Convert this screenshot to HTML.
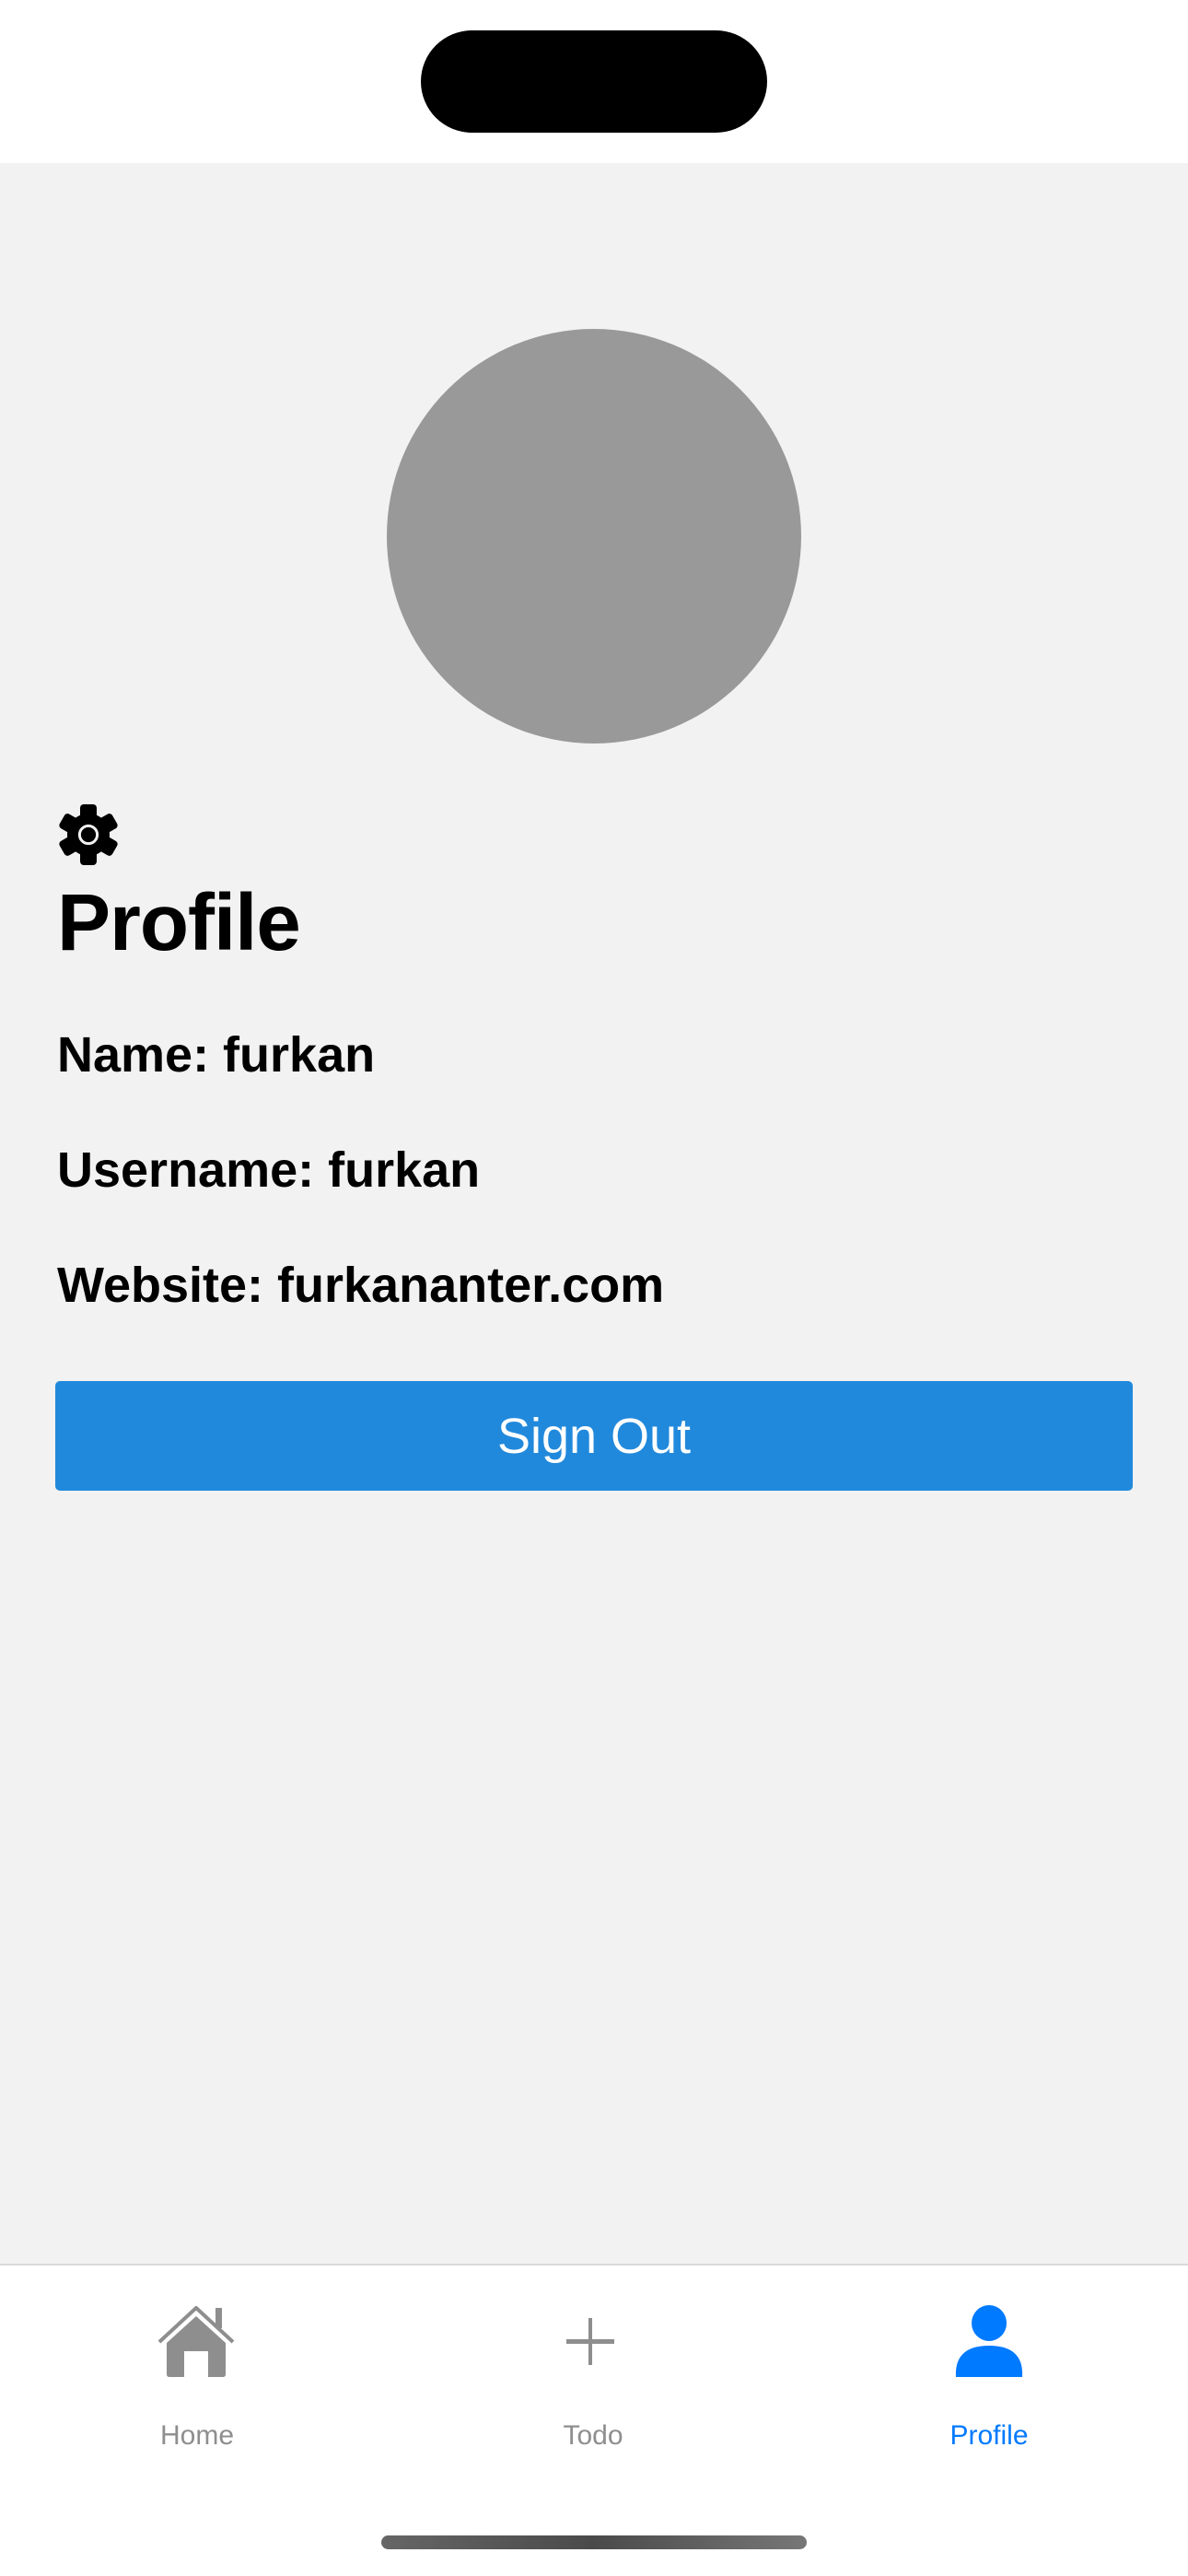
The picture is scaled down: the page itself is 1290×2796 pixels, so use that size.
<!DOCTYPE html>
<html><head><meta charset="utf-8"><style>
*{margin:0;padding:0;box-sizing:border-box}
html,body{width:1290px;height:2796px;overflow:hidden;background:#fff;font-family:"Liberation Sans",Arial,sans-serif}
.abs{position:absolute}
.main{left:0;top:177px;width:1290px;height:2280px;background:#f2f2f2}
.t{position:absolute;left:62px;font-weight:bold;color:#000;white-space:nowrap}
.lab{position:absolute;top:2629px;font-size:30px;line-height:30px;width:200px;text-align:center;color:#8e8e8f}
</style></head><body>
<div class="abs" style="left:457px;top:33px;width:376px;height:111px;background:#000;border-radius:56px"></div>
<div class="abs main"></div>
<div class="abs" style="left:420px;top:357px;width:450px;height:450px;border-radius:50%;background:#999"></div>
<svg class="abs" style="left:63px;top:873px" width="66" height="66" viewBox="0 0 66 66">
<g fill="#000">
<circle cx="33" cy="33" r="23"/>
<rect x="24" y="0" width="18" height="66" rx="4"/>
<rect x="24" y="0" width="18" height="66" rx="4" transform="rotate(60 33 33)"/>
<rect x="24" y="0" width="18" height="66" rx="4" transform="rotate(120 33 33)"/>
</g>
<circle cx="33" cy="33" r="9.6" fill="none" stroke="#f2f2f2" stroke-width="3"/>
</svg>
<div class="t" style="top:958px;font-size:87px;line-height:87px;letter-spacing:-1px">Profile</div>
<div class="t" style="top:1118px;font-size:54px;line-height:54px">Name: furkan</div>
<div class="t" style="top:1243px;font-size:54px;line-height:54px">Username: furkan</div>
<div class="t" style="top:1368px;font-size:54px;line-height:54px">Website: furkananter.com</div>
<div class="abs" style="left:60px;top:1499px;width:1170px;height:119px;background:#2189dc;border-radius:5px;color:#fff;font-size:54px;display:flex;align-items:center;justify-content:center">Sign Out</div>
<div class="abs" style="left:0;top:2457px;width:1290px;height:2px;background:#d9d9d9"></div>
<!-- home icon -->
<svg class="abs" style="left:171px;top:2502px" width="84" height="78" viewBox="0 0 84 78">
<path d="M2 40 L42 3 L82 40" fill="none" stroke="#8e8e8f" stroke-width="4" stroke-linejoin="round"/>
<rect x="63" y="3" width="7" height="22" fill="#8e8e8f"/>
<path d="M10 41 L42 12 L74 41 L74 75 Q74 78 71 78 L55 78 L55 50 L29 50 L29 78 L13 78 Q10 78 10 75 Z" fill="#8e8e8f"/>
</svg>
<!-- plus -->
<svg class="abs" style="left:615px;top:2516px" width="52" height="51" viewBox="0 0 52 51">
<rect x="24" y="0" width="4" height="51" fill="#8e8e8f"/>
<rect x="0" y="23" width="52" height="5" fill="#8e8e8f"/>
</svg>
<!-- person -->
<svg class="abs" style="left:1037px;top:2502px" width="74" height="78" viewBox="0 0 74 78">
<ellipse cx="37" cy="19.5" rx="19" ry="19.5" fill="#007aff"/>
<path d="M1 78 Q-1 44 37 44 Q75 44 73 78 Z" fill="#007aff"/>
</svg>
<div class="lab" style="left:114px">Home</div>
<div class="lab" style="left:544px">Todo</div>
<div class="lab" style="left:974px;color:#007aff">Profile</div>
<div class="abs" style="left:414px;top:2752px;width:462px;height:15px;border-radius:8px;background:linear-gradient(90deg,#666,#4a4a4a 50%,#777)"></div>
</body></html>
